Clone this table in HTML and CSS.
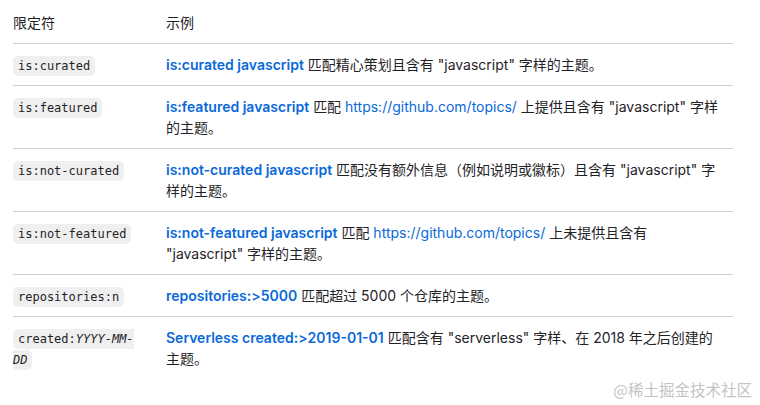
FILE: index.html
```html
<!DOCTYPE html>
<html lang="zh-CN">
<head>
<meta charset="utf-8">
<link rel="stylesheet" href="styles.css">
</head>
<body>
<div class="page">
  <table class="qual">
    <colgroup><col class="c1"><col class="c2"></colgroup>
    <thead>
      <tr><th>限定符</th><th>示例</th></tr>
    </thead>
    <tbody>
      <tr>
        <td><code>is:curated</code></td>
        <td><a class="q" href="#">is:curated javascript</a> 匹配精心策划且含有 "javascript" 字样的主题。</td>
      </tr>
      <tr>
        <td><code>is:featured</code></td>
        <td><a class="q" href="#">is:featured javascript</a> 匹配 <a href="#">https://github.com/topics/</a> 上提供且含有 "javascript" 字样的主题。</td>
      </tr>
      <tr>
        <td><code>is:not-curated</code></td>
        <td><a class="q" href="#">is:not-curated javascript</a> 匹配没有额外信息（例如说明或徽标）且含有 "javascript" 字样的主题。</td>
      </tr>
      <tr>
        <td><code>is:not-featured</code></td>
        <td><a class="q" href="#">is:not-featured javascript</a> 匹配 <a href="#">https://github.com/topics/</a> 上未提供且含有 "javascript" 字样的主题。</td>
      </tr>
      <tr>
        <td><code>repositories:n</code></td>
        <td><a class="q" href="#">repositories:&gt;5000</a> 匹配超过 5000 个仓库的主题。</td>
      </tr>
      <tr>
        <td><code>created:<em>YYYY-MM-DD</em></code></td>
        <td><a class="q" href="#">Serverless created:&gt;2019-01-01</a> 匹配含有 "serverless" 字样、在 2018 年之后创建的主题。</td>
      </tr>
    </tbody>
  </table>
  <div class="mark">@稀土掘金技术社区</div>
</div>
</body>
</html>
```
FILE: styles.css
```css
html, body {
  margin: 0;
  padding: 0;
  background: #ffffff;
}
body {
  font-family: Inter, "Noto Sans CJK SC", sans-serif;
  font-size: 14px;
  line-height: 21px;
  color: #1f2328;
}
.page {
  position: relative;
  width: 760px;
  height: 405px;
  padding: 2px 0 0 13px;
  box-sizing: border-box;
}
.qual {
  width: 720px;
  border-collapse: collapse;
  table-layout: fixed;
}
.c1 { width: 153px; }
.c2 { width: 567px; }
.qual th {
  font-weight: normal;
  text-align: left;
  padding: 10px 0;
  border-bottom: 1px solid #d0d0d0;
}
.qual td {
  padding: 10px 0;
  vertical-align: top;
  border-bottom: 1px solid #d0d0d0;
}
.qual tr:last-child td { border-bottom: none; }
.qual td:first-child { padding-right: 16px; }
.qual td:last-child { padding-right: 8px; }
code {
  font-family: "DejaVu Sans Mono", "Liberation Mono", monospace;
  font-size: 12px;
  line-height: 1;
  background: #efefef;
  border-radius: 5px;
  padding: 3px 5px;
  color: #1f2328;
}
code em { font-style: italic; }
a {
  color: #0969da;
  text-decoration: none;
}
a.q { font-weight: 600; }
.mark {
  position: absolute;
  right: 8px;
  bottom: 6px;
  font-size: 15.5px;
  color: #c4c4c4;
  font-family: "Noto Sans CJK SC", sans-serif;
  line-height: 20px;
}
```
